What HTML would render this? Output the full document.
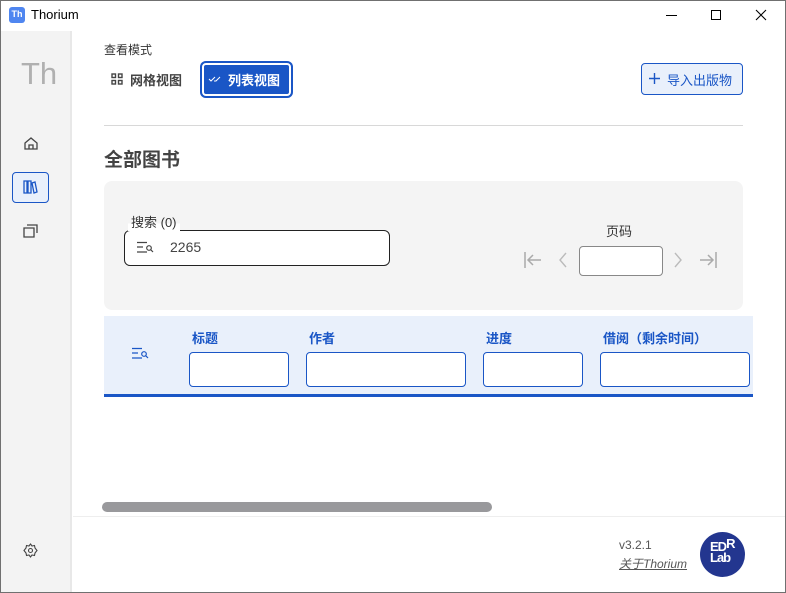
<!DOCTYPE html>
<html><head><meta charset="utf-8"><style>
*{margin:0;padding:0;box-sizing:border-box}
body{width:786px;height:593px;overflow:hidden;background:#fff;font-family:"Liberation Sans","Noto Sans CJK SC",sans-serif;position:relative;color:#333}
.a{position:absolute}
.frame{left:0;top:0;width:786px;height:593px;border:1px solid #707070;pointer-events:none}
.side{left:1px;top:31px;width:71px;height:561px;background:#f3f3f3;border-right:2px solid #e8e8e8}
.inp{position:absolute;background:#fff;border:1px solid #1a56c6;border-radius:4px;height:35px;top:352px}
.th{position:absolute;top:328px;font-size:13px;font-weight:bold;color:#1a56c6}
</style></head><body>
<div class="a" style="left:9px;top:7px;width:16px;height:16px;background:#4f86f0;border-radius:3px;color:#fff;font-size:9px;font-weight:bold;text-align:center;line-height:15px">Th</div>
<div class="a" style="left:31px;top:7px;font-size:13px;color:#000">Thorium</div>
<div class="a" style="left:666px;top:15px;width:11px;height:1px;background:#000"></div>
<div class="a" style="left:711px;top:10px;width:10px;height:10px;border:1px solid #000"></div>
<svg class="a" style="left:755px;top:9px" width="12" height="12"><path d="M1 1L11 11M11 1L1 11" stroke="#000" stroke-width="1.1"/></svg>
<div class="a side"></div>
<div class="a" style="left:21px;top:56px;font-size:31px;color:#b0b0b0">Th</div>
<svg class="a" style="left:23px;top:136px" width="16" height="15"><path d="M2 7L8 2L14 7V13H2Z M6 13V9H10V13" fill="none" stroke="#444" stroke-width="1.3"/></svg>
<div class="a" style="left:12px;top:172px;width:37px;height:31px;background:#e9f0fb;border:1px solid #1a56c6;border-radius:4px"></div>
<svg class="a" style="left:22px;top:179px" width="16" height="16"><path d="M2 2H5V14H2ZM6 2H9V14H6ZM10 4L13 3L15 13L12 14Z" fill="none" stroke="#1a56c6" stroke-width="1.3"/></svg>
<svg class="a" style="left:23px;top:224px" width="16" height="14"><path d="M4 1H14V9M1 4H11V13H1Z" fill="none" stroke="#444" stroke-width="1.3"/></svg>
<svg class="a" style="left:23px;top:543px" width="15" height="15" viewBox="0 0 15 15"><path d="M7.5 1L9 3L11.5 2.5L12 5L14 7.5L12 10L11.5 12.5L9 12L7.5 14L6 12L3.5 12.5L3 10L1 7.5L3 5L3.5 2.5L6 3Z" fill="none" stroke="#444" stroke-width="1.1"/><circle cx="7.5" cy="7.5" r="2" fill="none" stroke="#444" stroke-width="1.1"/></svg>
<div class="a" style="left:104px;top:41px;font-size:12px;color:#333">查看模式</div>
<svg class="a" style="left:111px;top:73px" width="12" height="12"><g fill="none" stroke="#444" stroke-width="1.4"><rect x="1" y="1" width="3.5" height="3.5"/><rect x="7.5" y="1" width="3.5" height="3.5"/><rect x="1" y="7.5" width="3.5" height="3.5"/><rect x="7.5" y="7.5" width="3.5" height="3.5"/></g></svg>
<div class="a" style="left:130px;top:70px;font-size:13px;font-weight:bold;color:#444">网格视图</div>
<div class="a" style="left:200px;top:61px;width:93px;height:37px;background:#1a56c6;border-radius:6px;box-shadow:inset 0 0 0 2px #1a56c6,inset 0 0 0 4px #fff"></div>
<svg class="a" style="left:208px;top:74px" width="14" height="10"><path d="M1 5L3 7L7 3M6 7L8 7L12 3" fill="none" stroke="#fff" stroke-width="1"/></svg>
<div class="a" style="left:228px;top:70px;font-size:13px;font-weight:bold;color:#fff">列表视图</div>
<div class="a" style="left:641px;top:63px;width:102px;height:32px;background:#e9f0fb;border:1px solid #1a56c6;border-radius:4px"></div>
<svg class="a" style="left:649px;top:73px" width="11" height="11"><path d="M5.5 0V11M0 5.5H11" stroke="#1a56c6" stroke-width="1.4"/></svg>
<div class="a" style="left:667px;top:70px;font-size:13px;color:#1a56c6">导入出版物</div>
<div class="a" style="left:104px;top:125px;width:639px;height:1px;background:#d8d8d8"></div>
<div class="a" style="left:104px;top:145px;font-size:19px;font-weight:bold;color:#444">全部图书</div>
<div class="a" style="left:104px;top:181px;width:639px;height:129px;background:#f4f4f4;border-radius:8px"></div>
<div class="a" style="left:124px;top:230px;width:266px;height:36px;background:#fff;border:1px solid #222;border-radius:6px"></div>
<div class="a" style="left:128px;top:212px;padding:0 3px;font-size:13px;color:#333;background:linear-gradient(#f4f4f4 60%,#fff 60%)">搜索 (0)</div>
<svg class="a" style="left:136px;top:241px" width="20" height="14"><g fill="none" stroke="#444" stroke-width="1.2"><path d="M1 1.5H11M1 6H7M1 11H11"/><circle cx="13" cy="7" r="2.3"/><path d="M14.7 8.7L17 11"/></g></svg>
<div class="a" style="left:170px;top:239px;font-size:14px;color:#444">2265</div>
<div class="a" style="left:606px;top:221px;font-size:13px;color:#333">页码</div>
<svg class="a" style="left:523px;top:251px" width="20" height="18"><path d="M2 1V17M18 9H5M10 4L5 9L10 14" fill="none" stroke="#aaa" stroke-width="1.5"/></svg>
<svg class="a" style="left:557px;top:251px" width="12" height="18"><path d="M9 2L3 9L9 16" fill="none" stroke="#bbb" stroke-width="1.4"/></svg>
<div class="a" style="left:579px;top:246px;width:84px;height:30px;background:#fff;border:1px solid #888;border-radius:4px"></div>
<svg class="a" style="left:672px;top:251px" width="12" height="18"><path d="M3 2L9 9L3 16" fill="none" stroke="#bbb" stroke-width="1.4"/></svg>
<svg class="a" style="left:698px;top:251px" width="20" height="18"><path d="M18 1V17M2 9H15M10 4L15 9L10 14" fill="none" stroke="#aaa" stroke-width="1.5"/></svg>
<div class="a" style="left:104px;top:316px;width:649px;height:81px;background:#e9f0fb;border-bottom:3px solid #1a56c6"></div>
<svg class="a" style="left:131px;top:347px" width="20" height="14"><g fill="none" stroke="#1a56c6" stroke-width="1.2"><path d="M1 1.5H11M1 6H7M1 11H11"/><circle cx="13" cy="7" r="2.3"/><path d="M14.7 8.7L17 11"/></g></svg>
<div class="th" style="left:192px">标题</div>
<div class="th" style="left:309px">作者</div>
<div class="th" style="left:486px">进度</div>
<div class="th" style="left:603px">借阅（剩余时间）</div>
<div class="inp" style="left:189px;width:100px"></div>
<div class="inp" style="left:306px;width:160px"></div>
<div class="inp" style="left:483px;width:100px"></div>
<div class="inp" style="left:600px;width:150px"></div>
<div class="a" style="left:102px;top:502px;width:390px;height:10px;background:#99999c;border-radius:5px"></div>
<div class="a" style="left:73px;top:516px;width:713px;height:1px;background:#eee"></div>
<div class="a" style="left:619px;top:538px;font-size:12px;color:#555">v3.2.1</div>
<div class="a" style="left:619px;top:555px;font-size:12px;color:#555;font-style:italic;text-decoration:underline">关于Thorium</div>
<div class="a" style="left:700px;top:532px;width:45px;height:45px;border-radius:50%;background:#23368f;color:#fff;font-weight:bold;font-size:13px;line-height:11px;padding:9px 0 0 10px;letter-spacing:-1px">ED<span style="position:relative;top:-3px">R</span><br>Lab</div>
<div class="a frame"></div>
</body></html>
